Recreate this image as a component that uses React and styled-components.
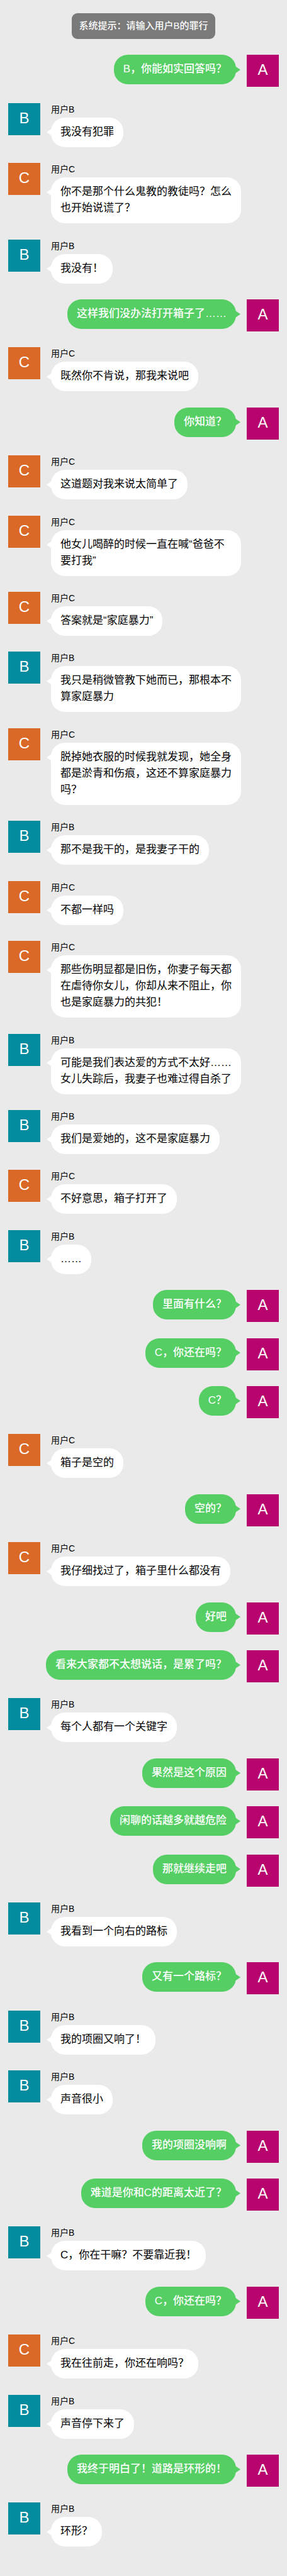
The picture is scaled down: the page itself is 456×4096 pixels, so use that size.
import React from 'react';
import styled, { createGlobalStyle, css } from 'styled-components';

const GlobalStyle = createGlobalStyle`
  * { box-sizing: border-box; }
  body {
    margin: 0;
    background: #eaeaea;
    color: #000;
    font-family: "Liberation Sans", "Noto Sans CJK SC", sans-serif;
  }
`;

const Conversation = styled.main`
  display: flex;
  flex-direction: column;
  justify-content: space-between;
  row-gap: 24px;
  min-height: 100vh;
  padding: 21px 13px 46px;
`;

const Notice = styled.p`
  align-self: center;
  margin: 0;
  padding: 9px 11px 10px;
  border-radius: 9px;
  background: #7a7a7a;
  color: #fff;
  font-size: 15px;
  font-weight: 500;
  line-height: 22px;
`;

const Row = styled.article`
  display: flex;
  flex-direction: ${({ $own }) => ($own ? 'row-reverse' : 'row')};
  align-items: flex-start;
  gap: 17px;
`;

const Avatar = styled.div`
  flex: none;
  width: 51px;
  height: 51px;
  padding-top: 9px;
  background: ${({ $color }) => $color};
  color: #fff;
  font-size: 24px;
  line-height: 30px;
  text-align: center;
`;

const Content = styled.div`
  display: flex;
  flex-direction: column;
  align-items: flex-start;
  ${({ $own }) => ($own ? css`margin-left: 60px;` : css`margin-right: 60px;`)}
`;

const Name = styled.span`
  height: 23px;
  font-size: 14px;
  line-height: 20px;
`;

const Bubble = styled.p`
  position: relative;
  margin: 0;
  padding: 10px 15px 11px;
  border-radius: 22px;
  background: ${({ $own }) => ($own ? '#55ce64' : '#fff')};
  color: ${({ $own }) => ($own ? '#fff' : '#000')};
  font-size: 17px;
  font-weight: ${({ $own }) => ($own ? 500 : 400)};
  line-height: 26px;

  &::after {
    content: "";
    position: absolute;
    top: 18px;
    width: 8px;
    height: 11px;
    background: inherit;
    ${({ $own }) =>
      $own
        ? css`
            right: -7px;
            clip-path: polygon(0 0, 100% 50%, 0 100%);
          `
        : css`
            left: -7px;
            clip-path: polygon(100% 0, 0 50%, 100% 100%);
          `}
  }
`;

const COLORS = { A: '#b8056e', B: '#008b9f', C: '#da6826' };

const MESSAGES = [
  ['A', 'B，你能如实回答吗？'],
  ['B', '我没有犯罪'],
  ['C', '你不是那个什么鬼教的教徒吗？怎么也开始说谎了？'],
  ['B', '我没有！'],
  ['A', '这样我们没办法打开箱子了……'],
  ['C', '既然你不肯说，那我来说吧'],
  ['A', '你知道？'],
  ['C', '这道题对我来说太简单了'],
  ['C', '他女儿喝醉的时候一直在喊“爸爸不要打我”'],
  ['C', '答案就是“家庭暴力”'],
  ['B', '我只是稍微管教下她而已，那根本不算家庭暴力'],
  ['C', '脱掉她衣服的时候我就发现，她全身都是淤青和伤痕，这还不算家庭暴力吗？'],
  ['B', '那不是我干的，是我妻子干的'],
  ['C', '不都一样吗'],
  ['C', '那些伤明显都是旧伤，你妻子每天都在虐待你女儿，你却从来不阻止，你也是家庭暴力的共犯！'],
  ['B', '可能是我们表达爱的方式不太好……女儿失踪后，我妻子也难过得自杀了'],
  ['B', '我们是爱她的，这不是家庭暴力'],
  ['C', '不好意思，箱子打开了'],
  ['B', '……'],
  ['A', '里面有什么？'],
  ['A', 'C，你还在吗？'],
  ['A', 'C？'],
  ['C', '箱子是空的'],
  ['A', '空的？'],
  ['C', '我仔细找过了，箱子里什么都没有'],
  ['A', '好吧'],
  ['A', '看来大家都不太想说话，是累了吗？'],
  ['B', '每个人都有一个关键字'],
  ['A', '果然是这个原因'],
  ['A', '闲聊的话越多就越危险'],
  ['A', '那就继续走吧'],
  ['B', '我看到一个向右的路标'],
  ['A', '又有一个路标？'],
  ['B', '我的项圈又响了！'],
  ['B', '声音很小'],
  ['A', '我的项圈没响啊'],
  ['A', '难道是你和C的距离太近了？'],
  ['B', 'C，你在干嘛？不要靠近我！'],
  ['A', 'C，你还在吗？'],
  ['C', '我在往前走，你还在响吗？'],
  ['B', '声音停下来了'],
  ['A', '我终于明白了！道路是环形的！'],
  ['B', '环形？'],
];

function Message({ user, text }) {
  const own = user === 'A';
  return (
    <Row $own={own}>
      <Avatar $color={COLORS[user]}>{user}</Avatar>
      <Content $own={own}>
        {!own && <Name>用户{user}</Name>}
        <Bubble $own={own}>{text}</Bubble>
      </Content>
    </Row>
  );
}

export default function App() {
  return (
    <>
      <GlobalStyle />
      <Conversation lang="zh-CN">
        <Notice>系统提示：请输入用户B的罪行</Notice>
        {MESSAGES.map(([user, text], i) => (
          <Message key={i} user={user} text={text} />
        ))}
      </Conversation>
    </>
  );
}
